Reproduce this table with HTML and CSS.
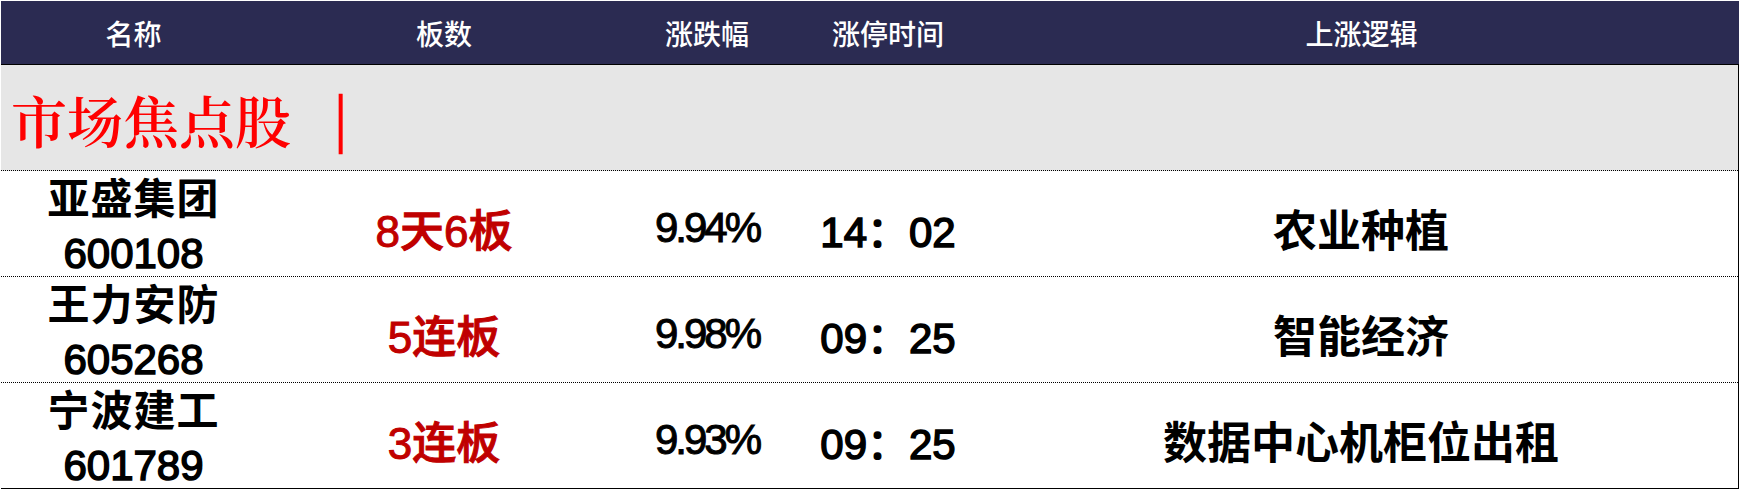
FILE: index.html
```html
<!DOCTYPE html>
<html lang="zh-CN">
<head>
<meta charset="utf-8">
<title>市场焦点股</title>
<link rel="stylesheet" href="styles.css">
</head>
<body>
<div class="board">
  <div class="head cols">
    <div class="hcell">名称</div>
    <div class="hcell">板数</div>
    <div class="hcell">涨跌幅</div>
    <div class="hcell">涨停时间</div>
    <div class="hcell">上涨逻辑</div>
  </div>
  <div class="body">
    <div class="section">
      <span class="section-title">市场焦点股</span><span class="section-bar">|</span>
    </div>
    <div class="row cols">
      <div class="name"><div class="name-line">亚盛集团</div><div class="code-line">600108</div></div>
      <div class="boards">8天6板</div>
      <div class="pct">9.94%</div>
      <div class="time">14：02</div>
      <div class="logic">农业种植</div>
    </div>
    <div class="row cols">
      <div class="name"><div class="name-line">王力安防</div><div class="code-line">605268</div></div>
      <div class="boards">5连板</div>
      <div class="pct">9.98%</div>
      <div class="time">09：25</div>
      <div class="logic">智能经济</div>
    </div>
    <div class="row cols">
      <div class="name"><div class="name-line">宁波建工</div><div class="code-line">601789</div></div>
      <div class="boards">3连板</div>
      <div class="pct">9.93%</div>
      <div class="time">09：25</div>
      <div class="logic">数据中心机柜位出租</div>
    </div>
  </div>
</div>
</body>
</html>
```

FILE: styles.css
```css
html, body {
  margin: 0;
  padding: 0;
  background: #ffffff;
}

.board {
  margin: 1px 0 0 1px;
  width: 1738px;
  font-family: "Liberation Sans", "Noto Sans CJK SC", sans-serif;
  color: #000;
}

.cols {
  display: grid;
  grid-template-columns: 265px 356px 170px 192px 1fr;
}

.head {
  height: 63px;
  background: #2b2b52;
  border-bottom: 1px solid #000;
  color: #ffffff;
  font-family: "Noto Sans CJK SC", sans-serif;
  font-size: 28px;
  font-weight: 500;
  align-items: center;
}

.hcell {
  text-align: center;
  padding-top: 1px;
}

.body {
  border-right: 1px solid #000;
}

.section {
  height: 105px;
  background: #e6e6e6;
  border-bottom: 1px dotted #000;
  display: flex;
  align-items: center;
  padding-left: 10px;
  color: #ff0000;
}

.section-title {
  font-family: "Noto Serif CJK SC", "AR PL UMing CN", "Noto Sans CJK SC", serif;
  font-size: 56px;
  font-weight: 600;
  line-height: 1;
  padding-top: 3px;
}

.section-bar {
  font-family: "Liberation Serif", serif;
  font-size: 66px;
  line-height: 1;
  margin-left: 43px;
  padding-top: 0;
  -webkit-text-stroke: 0.6px #ff0000;
}

.row {
  height: 105px;
  border-bottom: 1px dotted #000;
  align-items: center;
}

.row:last-child {
  border-bottom: 1px solid #000;
}

.name {
  align-self: start;
  text-align: center;
  font-size: 42px;
  line-height: 54px;
  padding-top: 2px;
}

.name-line {
  font-weight: 700;
  letter-spacing: 1px;
}

.code-line {
  font-weight: 400;
  -webkit-text-stroke: 1.5px #000;
}

.boards {
  text-align: center;
  color: #c00000;
  font-size: 44px;
  font-weight: 500;
  -webkit-text-stroke: 1px #c00000;
  padding-top: 3px;
}

.pct {
  text-align: center;
  font-size: 42px;
  letter-spacing: -3px;
  -webkit-text-stroke: 1px #000;
  padding-top: 4px;
}

.time {
  text-align: center;
  font-size: 42px;
  font-weight: 400;
  -webkit-text-stroke: 1.5px #000;
  padding-top: 4px;
}

.logic {
  text-align: center;
  font-size: 44px;
  font-weight: 700;
  padding-top: 3px;
}
```
